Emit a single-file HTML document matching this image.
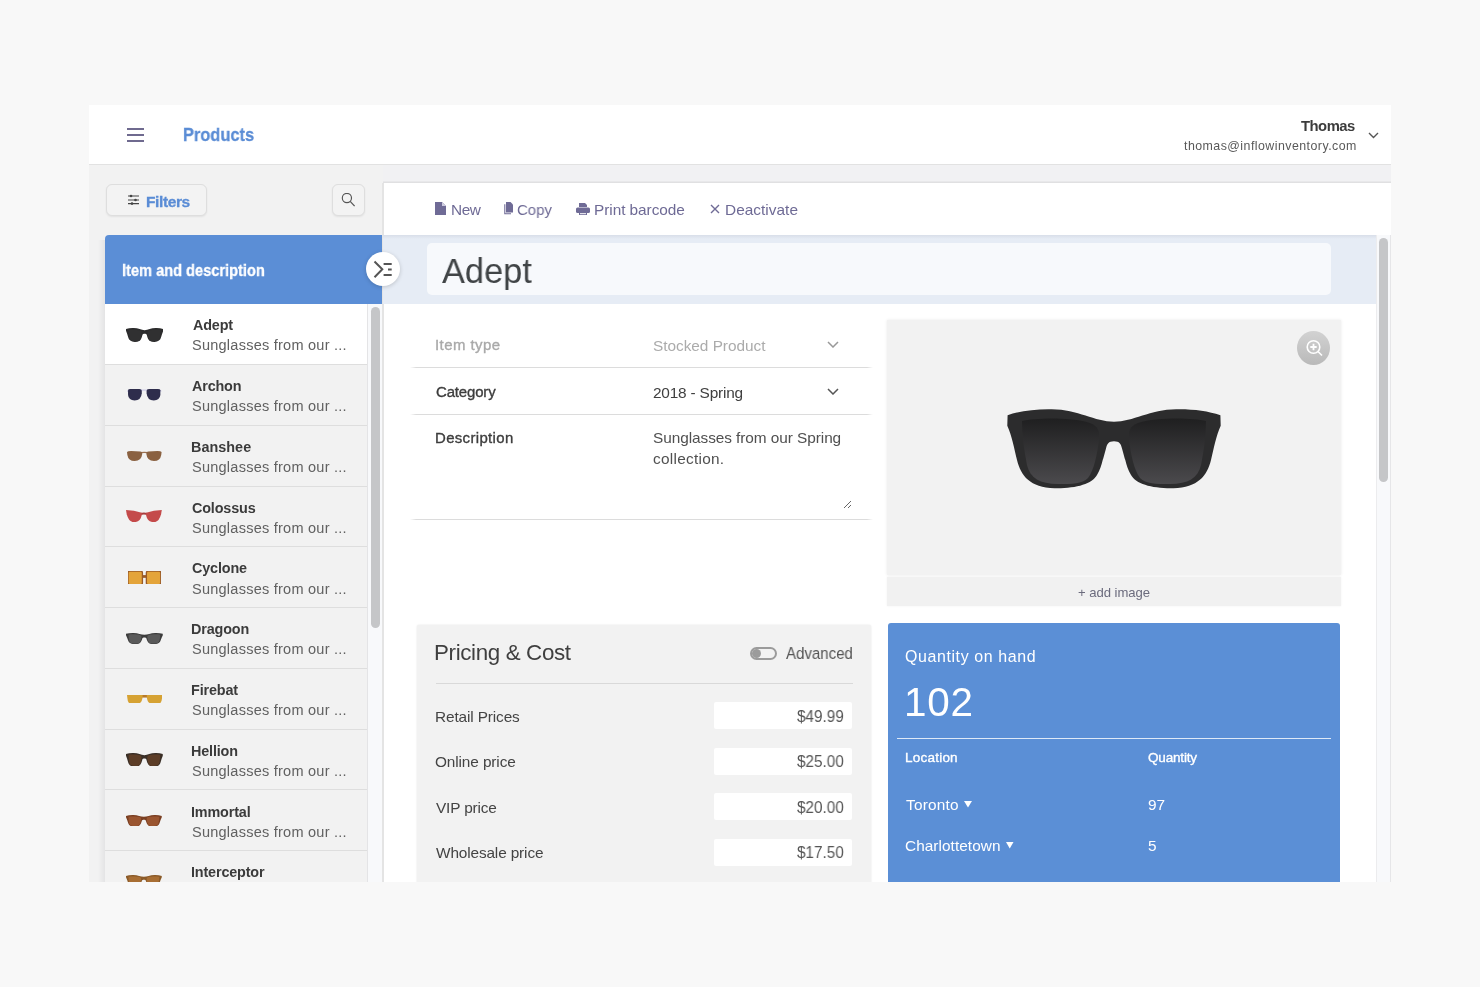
<!DOCTYPE html>
<html><head><meta charset="utf-8"><style>
*{box-sizing:border-box;margin:0;padding:0}
html,body{width:1480px;height:987px;overflow:hidden;background:#f8f8f8;font-family:"Liberation Sans",sans-serif;}
.a{position:absolute;white-space:nowrap;line-height:1;will-change:transform}
.r{position:absolute}
</style></head><body>
<div class="r" style="left:89px;top:105px;width:1302px;height:777px;background:#f2f2f2"></div>
<div class="r" style="left:89px;top:105px;width:1302px;height:59px;background:#fff"></div>
<div class="r" style="left:89px;top:164px;width:1302px;height:1px;background:#e2e2e2"></div>
<div class="r" style="left:127px;top:128px;width:17px;height:2px;background:#6f6a8f"></div>
<div class="r" style="left:127px;top:134px;width:17px;height:2px;background:#6f6a8f"></div>
<div class="r" style="left:127px;top:139.5px;width:17px;height:2px;background:#6f6a8f"></div>
<div class="a" id="t-products" style="left:182.80px;top:125.92px;font-size:18.52px;color:#5a8cd5;font-weight:bold;letter-spacing:0.000px;-webkit-text-stroke:0.3px #5a8cd5;transform:scaleX(0.8861);transform-origin:left top;">Products</div>
<div class="a" id="t-thomas" style="right:125.08px;top:119.36px;font-size:14.81px;color:#3c3c3c;font-weight:bold;letter-spacing:-0.480px;">Thomas</div>
<div class="a" id="t-email" style="right:123.12px;top:139.71px;font-size:12.39px;color:#595959;font-weight:normal;letter-spacing:0.458px;">thomas@inflowinventory.com</div>
<svg class="r" style="left:1368px;top:132px" width="11" height="7" viewBox="0 0 11 7"><path d="M1 1 L5.5 5.5 L10 1" fill="none" stroke="#555" stroke-width="1.4"/></svg>
<div class="r" style="left:106px;top:183.5px;width:101px;height:32px;border:1.5px solid #dedede;border-radius:6px;background:#f3f3f3;box-shadow:0 1px 2px rgba(0,0,0,.07)"></div>
<svg class="r" style="left:128px;top:194px" width="11" height="11" viewBox="0 0 11 11"><g stroke="#444" stroke-width="1.2"><path d="M0 2h11M0 6h11M0 9.6h11"/></g><g fill="#444"><circle cx="3" cy="2" r="1.3"/><circle cx="7.5" cy="6" r="1.3"/><circle cx="4" cy="9.6" r="1.3"/></g></svg>
<div class="a" id="t-filters" style="left:146.00px;top:193.55px;font-size:15.53px;color:#5a8cd5;font-weight:bold;letter-spacing:-0.403px;-webkit-text-stroke:0.3px #5a8cd5;">Filters</div>
<div class="r" style="left:331.5px;top:183.5px;width:33.5px;height:32.5px;border:1.5px solid #dedede;border-radius:6px;background:#f3f3f3;box-shadow:0 1px 2px rgba(0,0,0,.07)"></div>
<svg class="r" style="left:341px;top:193px" width="15" height="15" viewBox="0 0 15 15"><circle cx="5.9" cy="5" r="4.6" fill="none" stroke="#555" stroke-width="1.15"/><path d="M9.2 8.4 L13.6 13.2" stroke="#555" stroke-width="1.25"/></svg>
<div class="r" style="left:105px;top:235px;width:278px;height:69px;background:#5b8ed6;border-top-left-radius:4px"></div>
<div class="a" id="t-itemdesc" style="left:122.20px;top:262.43px;font-size:16.38px;color:#fff;font-weight:bold;letter-spacing:0.000px;-webkit-text-stroke:0.3px #fff;transform:scaleX(0.8925);transform-origin:left top;">Item and description</div>
<div class="r" style="left:98px;top:240px;width:7px;height:642px;background:linear-gradient(to right,rgba(0,0,0,0),rgba(0,0,20,.06))"></div>
<div class="r" style="left:105px;top:304px;width:262px;height:61px;background:#ffffff"></div>
<div class="a" id="t-n0" style="left:192.50px;top:318.22px;font-size:14.39px;color:#3b3b3b;font-weight:bold;letter-spacing:-0.150px;">Adept</div>
<div class="a" id="t-d0" style="left:191.50px;top:338.30px;font-size:14.53px;color:#616161;font-weight:normal;letter-spacing:0.243px;">Sunglasses from our ...</div>
<div class="r" style="left:105px;top:365px;width:262px;height:61px;background:#f2f2f2"></div>
<div class="a" id="t-n1" style="left:191.90px;top:379.02px;font-size:14.39px;color:#3b3b3b;font-weight:bold;letter-spacing:-0.160px;">Archon</div>
<div class="a" id="t-d1" style="left:191.50px;top:399.10px;font-size:14.53px;color:#616161;font-weight:normal;letter-spacing:0.243px;">Sunglasses from our ...</div>
<div class="r" style="left:105px;top:426px;width:262px;height:60px;background:#f2f2f2"></div>
<div class="a" id="t-n2" style="left:190.90px;top:439.82px;font-size:14.39px;color:#3b3b3b;font-weight:bold;letter-spacing:0.035px;">Banshee</div>
<div class="a" id="t-d2" style="left:191.50px;top:459.90px;font-size:14.53px;color:#616161;font-weight:normal;letter-spacing:0.243px;">Sunglasses from our ...</div>
<div class="r" style="left:105px;top:486px;width:262px;height:61px;background:#f2f2f2"></div>
<div class="a" id="t-n3" style="left:191.70px;top:500.62px;font-size:14.39px;color:#3b3b3b;font-weight:bold;letter-spacing:-0.150px;">Colossus</div>
<div class="a" id="t-d3" style="left:191.50px;top:520.70px;font-size:14.53px;color:#616161;font-weight:normal;letter-spacing:0.243px;">Sunglasses from our ...</div>
<div class="r" style="left:105px;top:547px;width:262px;height:61px;background:#f2f2f2"></div>
<div class="a" id="t-n4" style="left:191.70px;top:561.42px;font-size:14.39px;color:#3b3b3b;font-weight:bold;letter-spacing:-0.150px;">Cyclone</div>
<div class="a" id="t-d4" style="left:191.50px;top:581.50px;font-size:14.53px;color:#616161;font-weight:normal;letter-spacing:0.243px;">Sunglasses from our ...</div>
<div class="r" style="left:105px;top:608px;width:262px;height:61px;background:#f2f2f2"></div>
<div class="a" id="t-n5" style="left:191.40px;top:622.22px;font-size:14.39px;color:#3b3b3b;font-weight:bold;letter-spacing:-0.150px;">Dragoon</div>
<div class="a" id="t-d5" style="left:191.50px;top:642.30px;font-size:14.53px;color:#616161;font-weight:normal;letter-spacing:0.243px;">Sunglasses from our ...</div>
<div class="r" style="left:105px;top:669px;width:262px;height:61px;background:#f2f2f2"></div>
<div class="a" id="t-n6" style="left:191.40px;top:683.02px;font-size:14.39px;color:#3b3b3b;font-weight:bold;letter-spacing:-0.150px;">Firebat</div>
<div class="a" id="t-d6" style="left:191.50px;top:703.10px;font-size:14.53px;color:#616161;font-weight:normal;letter-spacing:0.243px;">Sunglasses from our ...</div>
<div class="r" style="left:105px;top:730px;width:262px;height:60px;background:#f2f2f2"></div>
<div class="a" id="t-n7" style="left:191.40px;top:743.82px;font-size:14.39px;color:#3b3b3b;font-weight:bold;letter-spacing:-0.150px;">Hellion</div>
<div class="a" id="t-d7" style="left:191.50px;top:763.90px;font-size:14.53px;color:#616161;font-weight:normal;letter-spacing:0.243px;">Sunglasses from our ...</div>
<div class="r" style="left:105px;top:790px;width:262px;height:61px;background:#f2f2f2"></div>
<div class="a" id="t-n8" style="left:191.40px;top:804.62px;font-size:14.39px;color:#3b3b3b;font-weight:bold;letter-spacing:-0.150px;">Immortal</div>
<div class="a" id="t-d8" style="left:191.50px;top:824.70px;font-size:14.53px;color:#616161;font-weight:normal;letter-spacing:0.243px;">Sunglasses from our ...</div>
<div class="r" style="left:105px;top:851px;width:262px;height:61px;background:#f2f2f2"></div>
<div class="a" id="t-n9" style="left:191.40px;top:865.42px;font-size:14.39px;color:#3b3b3b;font-weight:bold;letter-spacing:-0.150px;">Interceptor</div>
<div class="a" id="t-d9" style="left:191.50px;top:885.50px;font-size:14.53px;color:#616161;font-weight:normal;letter-spacing:0.243px;">Sunglasses from our ...</div>
<div class="r" style="left:105px;top:364px;width:262px;height:1px;background:#dedede"></div>
<div class="r" style="left:105px;top:425px;width:262px;height:1px;background:#dedede"></div>
<div class="r" style="left:105px;top:486px;width:262px;height:1px;background:#dedede"></div>
<div class="r" style="left:105px;top:546px;width:262px;height:1px;background:#dedede"></div>
<div class="r" style="left:105px;top:607px;width:262px;height:1px;background:#dedede"></div>
<div class="r" style="left:105px;top:668px;width:262px;height:1px;background:#dedede"></div>
<div class="r" style="left:105px;top:729px;width:262px;height:1px;background:#dedede"></div>
<div class="r" style="left:105px;top:789px;width:262px;height:1px;background:#dedede"></div>
<div class="r" style="left:105px;top:850px;width:262px;height:1px;background:#dedede"></div>
<div class="r" style="left:105px;top:911px;width:262px;height:1px;background:#dedede"></div>
<svg class="r" style="left:125.7px;top:327.5px" width="37.3" height="14" viewBox="7.6 9.3 213.1 79" preserveAspectRatio="none"><path d="M7.6,15.3 C20,11 35,9 51.8,9.3 C78,9.5 95,21.8 114,21.8 C133,21.8 150,9.5 177,9.3 C193,9 208,11 220.5,15.3 L220.7,25 C216,35 212,48 208,62 C204,78 192,88 170,88.2 C152,88.5 143,84 137,76 C131,68 128,55 126,48 C124,42 120,41.2 114,41.2 C108,41.2 104,42 102,48 C100,55 97,68 91,76 C85,84 76,88.5 58,88.2 C36,88 24,78 20,62 C16,48 12,35 7.6,25 Z" fill="#2c2c2d"/><path d="M22,21 C35,18 70,17 88,23 C96,26 98,31 97,40 C95,55 92,70 86,78 C80,84 70,84 58,84 C40,84 30,78 27,65 C24,50 22,35 22,21 Z" fill="#303031"/><path d="M206,21 C193,18 158,17 140,23 C132,26 130,31 131,40 C133,55 136,70 142,78 C148,84 158,84 170,84 C188,84 198,78 201,65 C204,50 206,35 206,21 Z" fill="#303031"/></svg>
<svg class="r" style="left:127.2px;top:389.2px" width="34.4" height="12.1" viewBox="0 0 100 40" preserveAspectRatio="none"><path d="M38,2 Q50,0 62,2 L62,8 Q50,6 38,8 Z" fill="#d9d7ea"/><path d="M0,4 L4,2 L4,10 L0,10 Z M100,4 L96,2 L96,10 L100,10 Z" fill="#d9d7ea"/><path d="M3,4 Q3,0 10,0 L36,0 Q43,0 43,6 L43,14 Q41,38 22,38 Q5,38 3,20 Z" fill="#2e2d4c"/><path d="M97.00,4 Q97.00,0 90.00,0 L64.00,0 Q57.00,0 57.00,6 L57.00,14 Q59.00,38 78.00,38 Q95.00,38 97.00,20 Z" fill="#2e2d4c"/></svg>
<svg class="r" style="left:127px;top:451px" width="34.6" height="10" viewBox="0 0 100 40" preserveAspectRatio="none"><path d="M40,4 Q50,2 60,4 L60,9 Q50,7 40,9 Z" fill="#9a7050"/><path d="M0,4 Q2,0 12,0 L38,2 Q45,3 44,12 Q42,40 22,40 Q4,40 1,16 Z" fill="#8a6141"/><path d="M100.00,4 Q98.00,0 88.00,0 L62.00,2 Q55.00,3 56.00,12 Q58.00,40 78.00,40 Q96.00,40 99.00,16 Z" fill="#8a6141"/></svg>
<svg class="r" style="left:126.3px;top:510.2px" width="35.8" height="12.2" viewBox="0 0 100 40" preserveAspectRatio="none"><path d="M40,10 Q50,7 60,10 L60,16 Q50,13 40,16 Z" fill="#a83c3c"/><path d="M0,0 Q22,1 44,9 L44,16 Q40,40 22,40 Q8,40 2,14 Z" fill="#c44a4a"/><path d="M100.00,0 Q78.00,1 56.00,9 L56.00,16 Q60.00,40 78.00,40 Q92.00,40 98.00,14 Z" fill="#c44a4a"/></svg>
<svg class="r" style="left:128px;top:570.5px" width="32.8" height="13.7" viewBox="0 0 100 40" preserveAspectRatio="none"><path d="M40,12 L60,12 L60,20 L40,20 Z" fill="#9a5a26"/><path d="M0,6 Q0,0 6,0 L38,0 Q44,0 44,6 L44,34 Q44,40 38,40 L6,40 Q0,40 0,34 Z" fill="#e4a43a" stroke="#9a5a26" stroke-width="4"/><path d="M100.00,6 Q100.00,0 94.00,0 L62.00,0 Q56.00,0 56.00,6 L56.00,34 Q56.00,40 62.00,40 L94.00,40 Q100.00,40 100.00,34 Z" fill="#e4a43a" stroke="#9a5a26" stroke-width="4"/></svg>
<svg class="r" style="left:126px;top:632.7px" width="36.8" height="11.2" viewBox="7.6 9.3 213.1 79" preserveAspectRatio="none"><path d="M7.6,15.3 C20,11 35,9 51.8,9.3 C78,9.5 95,21.8 114,21.8 C133,21.8 150,9.5 177,9.3 C193,9 208,11 220.5,15.3 L220.7,25 C216,35 212,48 208,62 C204,78 192,88 170,88.2 C152,88.5 143,84 137,76 C131,68 128,55 126,48 C124,42 120,41.2 114,41.2 C108,41.2 104,42 102,48 C100,55 97,68 91,76 C85,84 76,88.5 58,88.2 C36,88 24,78 20,62 C16,48 12,35 7.6,25 Z" fill="#3c3c3c"/><path d="M22,21 C35,18 70,17 88,23 C96,26 98,31 97,40 C95,55 92,70 86,78 C80,84 70,84 58,84 C40,84 30,78 27,65 C24,50 22,35 22,21 Z" fill="#5a5a5a"/><path d="M206,21 C193,18 158,17 140,23 C132,26 130,31 131,40 C133,55 136,70 142,78 C148,84 158,84 170,84 C188,84 198,78 201,65 C204,50 206,35 206,21 Z" fill="#5a5a5a"/></svg>
<svg class="r" style="left:126.7px;top:694.5px" width="35.4" height="8.6" viewBox="0 0 100 40" preserveAspectRatio="none"><path d="M40,0 L60,0 L60,12 L40,12 Z" fill="#b87a2a"/><path d="M0,0 L44,0 L44,10 Q42,40 30,40 L10,40 Q2,40 1,14 Z" fill="#d6a233"/><path d="M100.00,0 L56.00,0 L56.00,10 Q58.00,40 70.00,40 L90.00,40 Q98.00,40 99.00,14 Z" fill="#d6a233"/></svg>
<svg class="r" style="left:126px;top:752.7px" width="36.8" height="13.7" viewBox="7.6 9.3 213.1 79" preserveAspectRatio="none"><path d="M7.6,15.3 C20,11 35,9 51.8,9.3 C78,9.5 95,21.8 114,21.8 C133,21.8 150,9.5 177,9.3 C193,9 208,11 220.5,15.3 L220.7,25 C216,35 212,48 208,62 C204,78 192,88 170,88.2 C152,88.5 143,84 137,76 C131,68 128,55 126,48 C124,42 120,41.2 114,41.2 C108,41.2 104,42 102,48 C100,55 97,68 91,76 C85,84 76,88.5 58,88.2 C36,88 24,78 20,62 C16,48 12,35 7.6,25 Z" fill="#3a2f27"/><path d="M22,21 C35,18 70,17 88,23 C96,26 98,31 97,40 C95,55 92,70 86,78 C80,84 70,84 58,84 C40,84 30,78 27,65 C24,50 22,35 22,21 Z" fill="#5c3d27"/><path d="M206,21 C193,18 158,17 140,23 C132,26 130,31 131,40 C133,55 136,70 142,78 C148,84 158,84 170,84 C188,84 198,78 201,65 C204,50 206,35 206,21 Z" fill="#5c3d27"/></svg>
<svg class="r" style="left:126.3px;top:814.5px" width="35.8" height="11.7" viewBox="7.6 9.3 213.1 79" preserveAspectRatio="none"><path d="M7.6,15.3 C20,11 35,9 51.8,9.3 C78,9.5 95,21.8 114,21.8 C133,21.8 150,9.5 177,9.3 C193,9 208,11 220.5,15.3 L220.7,25 C216,35 212,48 208,62 C204,78 192,88 170,88.2 C152,88.5 143,84 137,76 C131,68 128,55 126,48 C124,42 120,41.2 114,41.2 C108,41.2 104,42 102,48 C100,55 97,68 91,76 C85,84 76,88.5 58,88.2 C36,88 24,78 20,62 C16,48 12,35 7.6,25 Z" fill="#7a3f22"/><path d="M22,21 C35,18 70,17 88,23 C96,26 98,31 97,40 C95,55 92,70 86,78 C80,84 70,84 58,84 C40,84 30,78 27,65 C24,50 22,35 22,21 Z" fill="#9a5530"/><path d="M206,21 C193,18 158,17 140,23 C132,26 130,31 131,40 C133,55 136,70 142,78 C148,84 158,84 170,84 C188,84 198,78 201,65 C204,50 206,35 206,21 Z" fill="#9a5530"/></svg>
<svg class="r" style="left:126.3px;top:875.3px" width="35.8" height="11.7" viewBox="7.6 9.3 213.1 79" preserveAspectRatio="none"><path d="M7.6,15.3 C20,11 35,9 51.8,9.3 C78,9.5 95,21.8 114,21.8 C133,21.8 150,9.5 177,9.3 C193,9 208,11 220.5,15.3 L220.7,25 C216,35 212,48 208,62 C204,78 192,88 170,88.2 C152,88.5 143,84 137,76 C131,68 128,55 126,48 C124,42 120,41.2 114,41.2 C108,41.2 104,42 102,48 C100,55 97,68 91,76 C85,84 76,88.5 58,88.2 C36,88 24,78 20,62 C16,48 12,35 7.6,25 Z" fill="#8a5a28"/><path d="M22,21 C35,18 70,17 88,23 C96,26 98,31 97,40 C95,55 92,70 86,78 C80,84 70,84 58,84 C40,84 30,78 27,65 C24,50 22,35 22,21 Z" fill="#a86e34"/><path d="M206,21 C193,18 158,17 140,23 C132,26 130,31 131,40 C133,55 136,70 142,78 C148,84 158,84 170,84 C188,84 198,78 201,65 C204,50 206,35 206,21 Z" fill="#a86e34"/></svg>
<div class="r" style="left:367px;top:304px;width:16px;height:578px;background:#f8f9fb;border-left:1px solid #e4e4e6;border-right:1px solid #dcdcde"></div>
<div class="r" style="left:371px;top:307px;width:9px;height:321px;background:#c5c6c8;border-radius:5px"></div>
<div class="r" style="left:383px;top:165px;width:1008px;height:18px;background:#f1f1f3"></div>
<div class="r" style="left:383px;top:180.5px;width:1008px;height:2.5px;background:linear-gradient(to bottom,rgba(0,0,0,.02),rgba(0,0,0,.09))"></div>
<div class="r" style="left:383px;top:182.5px;width:1008px;height:52.5px;background:#fff"></div>
<div class="r" style="left:382px;top:182.5px;width:1.5px;height:700px;background:#e4e4e4"></div>
<svg class="r" style="left:435px;top:202.2px" width="11" height="13" viewBox="0 0 11 13"><path d="M0,0 L7,0 L11,4 L11,13 L0,13 Z" fill="#6f6b96"/><path d="M7,0 L7,4 L11,4" fill="#cfcde0"/></svg>
<div class="a" id="t-new" style="left:450.60px;top:202.27px;font-size:15.38px;color:#6e6a95;font-weight:normal;letter-spacing:-0.400px;">New</div>
<svg class="r" style="left:502.5px;top:202px" width="10.5" height="13" viewBox="0 0 10.5 13"><path d="M3,0 L7.5,0 L10.5,3 L10.5,10.5 L3,10.5 Z" fill="#6f6b96"/><path d="M1.8,2.2 L1.8,11.8 L8,11.8" fill="none" stroke="#6f6b96" stroke-width="1.1"/></svg>
<div class="a" id="t-copy" style="left:517.40px;top:202.27px;font-size:15.38px;color:#6e6a95;font-weight:normal;letter-spacing:0.000px;transform:scaleX(0.9719);transform-origin:left top;">Copy</div>
<svg class="r" style="left:576px;top:202.5px" width="14" height="12.5" viewBox="0 0 14 12.5"><path d="M3,0 L9,0 L11,2 L11,4 L3,4 Z" fill="#6f6b96"/><rect x="0" y="4.5" width="14" height="5.5" rx="1.5" fill="#6f6b96"/><rect x="3" y="9" width="8" height="3.5" fill="#6f6b96"/><rect x="4" y="10.2" width="6" height="1" fill="#fff"/></svg>
<div class="a" id="t-print" style="left:593.70px;top:202.27px;font-size:15.38px;color:#6e6a95;font-weight:normal;letter-spacing:-0.050px;">Print barcode</div>
<svg class="r" style="left:709.5px;top:203.5px" width="10" height="10" viewBox="0 0 10 10"><path d="M1,1 L9,9 M9,1 L1,9" stroke="#6f6b96" stroke-width="1.4"/></svg>
<div class="a" id="t-deact" style="left:725.00px;top:202.27px;font-size:15.38px;color:#6e6a95;font-weight:normal;letter-spacing:0.033px;">Deactivate</div>
<div class="r" style="left:383px;top:235px;width:992.5px;height:69px;background:#e6ecf5"></div>
<div class="r" style="left:383px;top:235px;width:992.5px;height:4px;background:linear-gradient(to bottom,rgba(0,0,40,.06),rgba(0,0,40,0))"></div>
<div class="r" style="left:427px;top:243.3px;width:904px;height:52px;background:#f7f9fc;border-radius:5px"></div>
<div class="a" id="t-adept" style="left:441.70px;top:253.53px;font-size:35.75px;color:#404446;font-weight:normal;letter-spacing:0.000px;transform:scaleX(0.9623);transform-origin:left top;">Adept</div>
<div class="r" style="left:383.5px;top:304px;width:992px;height:578px;background:#fff"></div>
<div class="r" style="left:1375.5px;top:235px;width:15.5px;height:647px;background:#f8f9fb;border-left:1px solid #ececee;border-right:1px solid #e6e6e8"></div>
<div class="r" style="left:1379px;top:238px;width:9px;height:244px;background:#c5c6c8;border-radius:5px"></div>
<div class="r" style="left:366px;top:252px;width:34px;height:34px;background:#fff;border-radius:50%;box-shadow:0 1px 4px rgba(0,0,0,.18)"></div>
<svg class="r" style="left:373px;top:260px" width="20" height="19" viewBox="0 0 20 19"><path d="M1.5,1.5 L9.3,9.3 L1.5,17.2" fill="none" stroke="#555" stroke-width="2"/><path d="M10.6,4 H18.7 M15,9.4 H18.7 M10.6,14.9 H18.7" stroke="#555" stroke-width="2"/></svg>
<div class="a" id="t-itype" style="left:435.00px;top:338.44px;font-size:14.96px;color:#a9a9a9;font-weight:normal;letter-spacing:0.441px;-webkit-text-stroke:0.35px #a9a9a9;">Item type</div>
<div class="a" id="t-stocked" style="left:653.20px;top:338.27px;font-size:15.38px;color:#ababab;font-weight:normal;letter-spacing:-0.025px;">Stocked Product</div>
<svg class="r" style="left:826.5px;top:341px" width="12" height="7" viewBox="0 0 12 7"><path d="M1 1 L6 6 L11 1" fill="none" stroke="#999" stroke-width="1.5"/></svg>
<div class="r" style="left:410px;top:367px;width:463px;height:1px;background:linear-gradient(to right,rgba(220,220,220,0),#dcdcdc 6px,#dcdcdc calc(100% - 6px),rgba(220,220,220,0))"></div>
<div class="a" id="t-cat" style="left:436.00px;top:385.14px;font-size:14.96px;color:#3d3d3d;font-weight:normal;letter-spacing:-0.142px;-webkit-text-stroke:0.35px #3d3d3d;">Category</div>
<div class="a" id="t-spring" style="left:653.20px;top:384.57px;font-size:15.38px;color:#404040;font-weight:normal;letter-spacing:-0.183px;">2018 - Spring</div>
<svg class="r" style="left:826.5px;top:388px" width="12" height="7" viewBox="0 0 12 7"><path d="M1 1 L6 6 L11 1" fill="none" stroke="#555" stroke-width="1.5"/></svg>
<div class="r" style="left:410px;top:413.5px;width:463px;height:1px;background:linear-gradient(to right,rgba(220,220,220,0),#dcdcdc 6px,#dcdcdc calc(100% - 6px),rgba(220,220,220,0))"></div>
<div class="a" id="t-desc" style="left:435.00px;top:431.14px;font-size:14.96px;color:#3d3d3d;font-weight:normal;letter-spacing:0.340px;-webkit-text-stroke:0.35px #3d3d3d;">Description</div>
<div class="a" id="t-sfos" style="left:653.20px;top:429.77px;font-size:15.38px;color:#505050;font-weight:normal;letter-spacing:-0.062px;">Sunglasses from our Spring</div>
<div class="a" id="t-coll" style="left:653.20px;top:451.07px;font-size:15.38px;color:#505050;font-weight:normal;letter-spacing:0.270px;">collection.</div>
<svg class="r" style="left:842px;top:499px" width="10" height="10" viewBox="0 0 10 10"><path d="M9,2 L2,9 M9,6 L6,9" stroke="#666" stroke-width="1"/></svg>
<div class="r" style="left:410px;top:518.5px;width:463px;height:1px;background:linear-gradient(to right,rgba(220,220,220,0),#dcdcdc 6px,#dcdcdc calc(100% - 6px),rgba(220,220,220,0))"></div>
<div class="r" style="left:887px;top:320px;width:453.5px;height:255px;background:#f2f2f2;box-shadow:0 0 3px rgba(0,0,0,.09)"></div>
<div class="r" style="left:887px;top:576.5px;width:453.5px;height:29px;background:#f1f1f1;box-shadow:0 0 2px rgba(0,0,0,.06)"></div>
<div class="a" id="t-addimg" style="left:1078.00px;top:585.80px;font-size:13.10px;color:#6b6b7d;font-weight:normal;letter-spacing:-0.040px;">+ add image</div>
<div class="r" style="left:1297.3px;top:331px;width:33px;height:34px;border-radius:50%;background:linear-gradient(to bottom,#d2d2d2,#b9b9b9)"></div>
<svg class="r" style="left:1303px;top:337px" width="22" height="22" viewBox="0 0 22 22"><circle cx="10.5" cy="10" r="6.3" fill="none" stroke="#fff" stroke-width="1.6"/><path d="M10.5,6.8 V13.2 M7.3,10 H13.7" stroke="#fff" stroke-width="1.8"/><path d="M15,14.5 L19,18.5" stroke="#fff" stroke-width="1.6"/></svg>
<svg class="r" style="left:1000px;top:400px" width="230" height="95" viewBox="0 0 230 95"><defs><linearGradient id="lg" x1="0" y1="0" x2="0" y2="1"><stop offset="0" stop-color="#1f1f20"/><stop offset="1" stop-color="#4b4a4d"/></linearGradient></defs>
<path d="M7.6,15.3 C20,11 35,9 51.8,9.3 C78,9.5 95,21.8 114,21.8 C133,21.8 150,9.5 176.2,9.3 C193,9 208,11 220.4,15.3 L220.7,25.8 C216,36 214,48 211,60 C207,76 198,87.5 173.4,88.2 C152,88.6 136,84 131,75 C128,70 126.5,65 125.3,60 C124.5,58 123.5,54 122,48.5 C121,44 119.5,41.2 114,41.2 C108.5,41.2 107,44 106,48.5 C104.5,54 103.5,58 102.7,60 C101.5,65 100,70 97,75 C92,84 76,88.6 54.6,88.2 C30,87.5 21,76 17,60 C14,48 12,36 7.3,25.8 Z" fill="#2c2c2d"/>
<path d="M22,21 C35,18 70,17 90,23 C98,26 100,31 99,40 C97,55 94,70 88,78 C82,84 72,84 58,84 C40,84 30,78 27,65 C24,50 22,35 22,21 Z" fill="url(#lg)"/>
<path d="M206,21 C193,18 158,17 138,23 C130,26 128,31 129,40 C131,55 134,70 140,78 C146,84 156,84 170,84 C188,84 198,78 201,65 C204,50 206,35 206,21 Z" fill="url(#lg)"/></svg>
<div class="r" style="left:417px;top:624.5px;width:453.5px;height:260px;background:#f2f2f2;border-radius:2px;box-shadow:0 0 2px rgba(0,0,0,.12)"></div>
<div class="a" id="t-pricing" style="left:434.20px;top:642.37px;font-size:22.36px;color:#3f3f3f;font-weight:normal;letter-spacing:-0.359px;">Pricing &amp; Cost</div>
<div class="r" style="left:750.3px;top:646.8px;width:26.5px;height:13px;border:2px solid #9b9b9b;border-radius:7px"></div>
<div class="r" style="left:751.5px;top:648.5px;width:9.5px;height:9.5px;background:#9b9b9b;border-radius:50%"></div>
<div class="a" id="t-adv" style="left:785.60px;top:645.79px;font-size:15.95px;color:#555;font-weight:normal;letter-spacing:0.000px;transform:scaleX(0.9429);transform-origin:left top;">Advanced</div>
<div class="r" style="left:436px;top:683px;width:417px;height:1px;background:#d9d9d9"></div>
<div class="a" id="t-pl0" style="left:435.20px;top:708.97px;font-size:15.38px;color:#444;font-weight:normal;letter-spacing:-0.130px;">Retail Prices</div>
<div class="r" style="left:714.4px;top:702.2px;width:138px;height:27px;background:#fff;border-radius:2px"></div>
<div class="a" id="t-pv0" style="right:636.54px;top:708.69px;font-size:15.95px;color:#555;font-weight:normal;letter-spacing:0.000px;transform:scaleX(0.9586);transform-origin:right top;">$49.99</div>
<div class="a" id="t-pl1" style="left:435.20px;top:754.47px;font-size:15.38px;color:#444;font-weight:normal;letter-spacing:-0.117px;">Online price</div>
<div class="r" style="left:714.4px;top:747.7px;width:138px;height:27px;background:#fff;border-radius:2px"></div>
<div class="a" id="t-pv1" style="right:636.54px;top:754.19px;font-size:15.95px;color:#555;font-weight:normal;letter-spacing:0.000px;transform:scaleX(0.9586);transform-origin:right top;">$25.00</div>
<div class="a" id="t-pl2" style="left:436.20px;top:799.97px;font-size:15.38px;color:#444;font-weight:normal;letter-spacing:-0.159px;">VIP price</div>
<div class="r" style="left:714.4px;top:793.2px;width:138px;height:27px;background:#fff;border-radius:2px"></div>
<div class="a" id="t-pv2" style="right:636.54px;top:799.69px;font-size:15.95px;color:#555;font-weight:normal;letter-spacing:0.000px;transform:scaleX(0.9586);transform-origin:right top;">$20.00</div>
<div class="a" id="t-pl3" style="left:436.20px;top:845.47px;font-size:15.38px;color:#444;font-weight:normal;letter-spacing:-0.136px;">Wholesale price</div>
<div class="r" style="left:714.4px;top:838.7px;width:138px;height:27px;background:#fff;border-radius:2px"></div>
<div class="a" id="t-pv3" style="right:636.54px;top:845.19px;font-size:15.95px;color:#555;font-weight:normal;letter-spacing:0.000px;transform:scaleX(0.9586);transform-origin:right top;">$17.50</div>
<div class="r" style="left:888px;top:623px;width:451.7px;height:262px;background:#5b8fd6;border-radius:3px"></div>
<div class="a" id="t-qoh" style="left:905.10px;top:649.39px;font-size:15.95px;color:#fff;font-weight:normal;letter-spacing:0.608px;">Quantity on hand</div>
<div class="a" id="t-102" style="left:904.40px;top:682.15px;font-size:40.45px;color:#fff;font-weight:normal;letter-spacing:0.700px;">102</div>
<div class="r" style="left:896.7px;top:738px;width:434.3px;height:1.2px;background:rgba(255,255,255,.8)"></div>
<div class="a" id="t-loc" style="left:905.20px;top:750.84px;font-size:13.53px;color:#fff;font-weight:normal;letter-spacing:0.220px;-webkit-text-stroke:0.35px #fff;">Location</div>
<div class="a" id="t-qty" style="left:1148.00px;top:750.84px;font-size:13.53px;color:#fff;font-weight:normal;letter-spacing:-0.182px;-webkit-text-stroke:0.35px #fff;">Quantity</div>
<div class="a" id="t-tor" style="left:906.20px;top:796.87px;font-size:15.38px;color:#fff;font-weight:normal;letter-spacing:0.199px;">Toronto</div>
<svg class="r" style="left:963.8px;top:801px" width="8" height="6.5" viewBox="0 0 8 6.5"><path d="M0,0 L8,0 L4,6.5 Z" fill="#fff"/></svg>
<div class="a" id="t-97" style="left:1148.00px;top:796.87px;font-size:15.38px;color:#fff;font-weight:normal;letter-spacing:0.000px;">97</div>
<div class="a" id="t-cha" style="left:905.20px;top:837.97px;font-size:15.38px;color:#fff;font-weight:normal;letter-spacing:0.047px;">Charlottetown</div>
<svg class="r" style="left:1006.4px;top:842px" width="7.5" height="6.5" viewBox="0 0 7.5 6.5"><path d="M0,0 L7.5,0 L3.75,6.5 Z" fill="#fff"/></svg>
<div class="a" id="t-5" style="left:1148.00px;top:837.97px;font-size:15.38px;color:#fff;font-weight:normal;letter-spacing:0.000px;">5</div>
<div class="r" style="left:0px;top:882px;width:1480px;height:105px;background:#f8f8f8"></div>
</body></html>
